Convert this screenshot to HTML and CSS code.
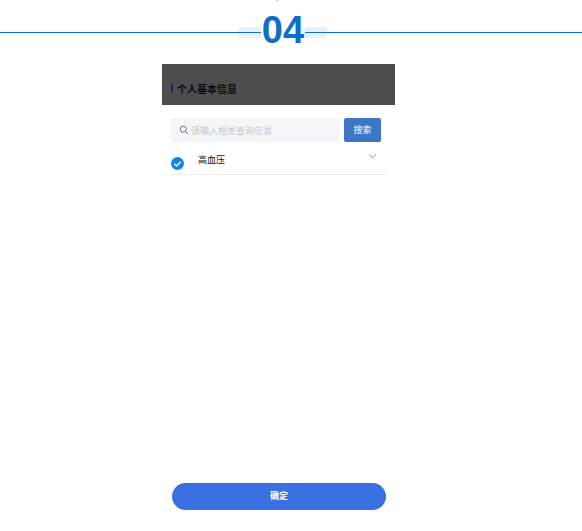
FILE: index.html
```html
<!DOCTYPE html>
<html lang="en">
<head>
    <meta charset="UTF-8">
    <title>04</title>
    <link rel="stylesheet" href="styles.css">
</head>
<body>

    <!-- Slide heading, the line runs behind the number -->
    <div class="slide-head">
        <span class="top-mark"></span>
        <div class="band">
            <span class="slide-num">04</span>
        </div>
    </div>

    <div class="phone">
        <div class="phone-head">
            <span class="head-bar"></span>
            <span class="head-title">个人基本信息</span>
        </div>

        <div class="search-row">
            <div class="search-box">
                <svg class="search-icon" width="10" height="10" viewBox="0 0 10 10">
                    <circle cx="4.2" cy="4.2" r="3" fill="none" stroke="#666" stroke-width="0.9"/>
                    <path d="M6.5 6.5 L9 9" stroke="#666" stroke-width="1"/>
                </svg>
                <span class="search-hint">请输入相关查询信息</span>
            </div>
            <div class="search-btn">搜索</div>
        </div>

        <div class="result-row">
            <svg class="check-icon" width="13" height="13" viewBox="0 0 13 13">
                <circle cx="6.5" cy="6.5" r="6.5" fill="#0f86ee"/>
                <path d="M3.4 6.8 L5.6 8.9 L9.7 4.8" fill="none" stroke="#fff" stroke-width="1.4"/>
            </svg>
            <span class="result-name">高血压</span>
            <svg class="chevron" width="9" height="5" viewBox="0 0 9 5">
                <path d="M1 0.5 L4.5 3.8 L8 0.5" fill="none" stroke="#888" stroke-width="0.9"/>
            </svg>
        </div>

        <div class="confirm-btn">确定</div>
    </div>

</body>
</html>
```

FILE: styles.css
```css
body {
    margin: 0;
    padding: 0;
    background-color: #fff;
    color: #000;
    font-family: "Liberation Sans", "Noto Sans CJK SC", sans-serif;
}

.slide-head {
    height: 64px;
    display: flex;
    justify-content: center;
    background: linear-gradient(#0f6fc4, #0f6fc4) 0 32px / 100% 1px no-repeat;
    position: relative;
}

.top-mark {
    position: absolute;
    left: 276px;
    top: 0;
    width: 3px;
    height: 1px;
    background-color: #bcd8f0;
}

.band {
    width: 88px;
    height: 11px;
    margin-top: 27px;
    margin-left: -16px;
    display: flex;
    justify-content: center;
    align-items: center;
    background: linear-gradient(#0f6fc4, #0f6fc4) 0 5px / 100% 1px no-repeat, #e9f2fc;
}

.slide-num {
    padding: 0 1px 5px;
    background-color: #fff;
    color: #0f6fc4;
    font-size: 38px;
    font-weight: bold;
    line-height: 11px;
}

.phone {
    width: 233px;
    height: 446px;
    margin-left: 162px;
    display: flex;
    flex-direction: column;
}

.phone-head {
    height: 41px;
    box-sizing: border-box;
    padding: 8px 0 0 9px;
    display: flex;
    align-items: center;
    gap: 4px;
    background-color: #4d4d4d;
}

.head-bar {
    width: 2px;
    height: 9px;
    background-color: #12296b;
}

.head-title {
    font-size: 10px;
    font-weight: bold;
    color: #0a0a0a;
}

.search-row {
    margin: 13px 14px 0 9px;
    display: flex;
    gap: 4px;
}

.search-box {
    flex: 1;
    height: 24px;
    box-sizing: border-box;
    padding-left: 8px;
    display: flex;
    align-items: center;
    gap: 2px;
    background-color: #f5f6f8;
}

.search-hint {
    font-size: 9px;
    color: #c4c6ca;
}

.search-btn {
    width: 37px;
    height: 24px;
    line-height: 24px;
    text-align: center;
    font-size: 9px;
    color: #fff;
    background-color: #3d76c4;
    border-radius: 2px;
}

.result-row {
    height: 33px;
    margin: 0 9px;
    box-sizing: border-box;
    padding-right: 9px;
    display: flex;
    border-bottom: 1px solid #f1f1f1;
}

.check-icon {
    margin-top: 15px;
}

.result-name {
    margin: 6px 0 0 14px;
    font-size: 9px;
    line-height: 24px;
    color: #111;
}

.chevron {
    margin: 12px 0 0 auto;
}

.confirm-btn {
    width: 214px;
    height: 27px;
    margin: auto 0 0 10px;
    line-height: 27px;
    text-align: center;
    font-size: 9px;
    font-weight: bold;
    color: #fff;
    background-color: #3a70e2;
    border-radius: 14px;
}
```
